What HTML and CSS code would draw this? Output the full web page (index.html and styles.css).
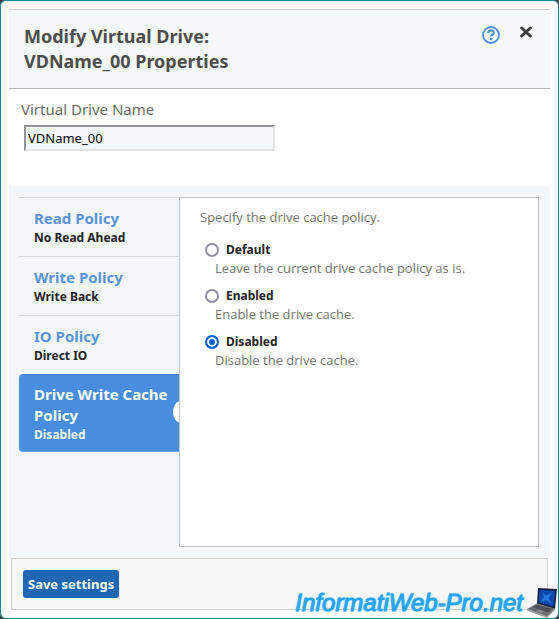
FILE: index.html
```
<!DOCTYPE html>
<html lang="en">
<head>
    <meta charset="UTF-8">
    <meta name="viewport" content="width=device-width, initial-scale=1.0">
    <title>Modify Virtual Drive</title>
    <link rel="stylesheet" href="styles.css">
</head>
<body>

    <form class="dialog">
        <header class="dialog-header">
            <h1>Modify Virtual Drive:<br>VDName_00 Properties</h1>
            <div class="header-actions">
                <button type="button" class="icon-button" aria-label="Help">
                    <svg width="18" height="18" viewBox="0 0 18 18" fill="none" stroke="#4a8fe2">
                        <circle cx="9" cy="9" r="8" stroke-width="1.8"/>
                        <path d="M6.3 6.9C6.3 5.2 7.5 4.4 9 4.4c1.6 0 2.7.9 2.7 2.2 0 1.9-2.5 2-2.5 4" stroke-width="2.2"/>
                        <path d="M8 12.9h2.4" stroke-width="2.3"/>
                    </svg>
                </button>
                <button type="button" class="icon-button" aria-label="Close">
                    <svg width="12" height="12" viewBox="0 0 12 12" stroke="#3d3d3d" stroke-width="3" stroke-linecap="round">
                        <path d="M1.7 2 10.3 10M10.3 2 1.7 10"/>
                    </svg>
                </button>
            </div>
        </header>

        <div class="name-section">
            <label for="driveName">Virtual Drive Name</label>
            <input type="text" id="driveName" name="driveName" value="VDName_00">
        </div>

        <div class="policies">
            <nav class="tabs">
                <button type="button" class="tab">
                    <span class="tab-title">Read Policy</span>
                    <span class="tab-value">No Read Ahead</span>
                </button>
                <button type="button" class="tab">
                    <span class="tab-title">Write Policy</span>
                    <span class="tab-value">Write Back</span>
                </button>
                <button type="button" class="tab">
                    <span class="tab-title">IO Policy</span>
                    <span class="tab-value">Direct IO</span>
                </button>
                <button type="button" class="tab active">
                    <span class="tab-title">Drive Write Cache Policy</span>
                    <span class="tab-value">Disabled</span>
                </button>
            </nav>

            <section class="tab-content">
                <p class="intro">Specify the drive cache policy.</p>

                <div class="option">
                    <input type="radio" id="cacheDefault" name="cache" value="default">
                    <label for="cacheDefault">Default</label>
                    <p>Leave the current drive cache policy as is.</p>
                </div>
                <div class="option">
                    <input type="radio" id="cacheEnabled" name="cache" value="enabled">
                    <label for="cacheEnabled">Enabled</label>
                    <p>Enable the drive cache.</p>
                </div>
                <div class="option">
                    <input type="radio" id="cacheDisabled" name="cache" value="disabled" checked>
                    <label for="cacheDisabled">Disabled</label>
                    <p>Disable the drive cache.</p>
                </div>
            </section>
        </div>

        <footer class="dialog-footer">
            <button type="submit" class="save-button">Save settings</button>
        </footer>

        <div class="watermark">
            <span>InformatiWeb-Pro.net</span>
            <svg width="32" height="31" viewBox="0 0 32 31">
                <path d="M12 1 31 2 29 22 11 17z" fill="#15203f"/>
                <path d="M13.5 2.8 29.3 3.8 27.6 19.5 12.7 15.6z" fill="#0b48ad"/>
                <path d="M16 4.5 20 9 26 5 22.5 11 26 17 20.5 13 15 14.5 18 10z" fill="#2478dc"/>
                <path d="M11 16.5 29 21.5 21 30 1 22z" fill="#6d7175"/>
                <path d="M11 18 26 22 22.5 25.5 6 20.3z" fill="#4c4f54"/>
                <path d="M10 24 14 22.8 18 24.4 14.3 26z" fill="#84888c"/>
                <path d="M1 22 21 29 29 21.5V23L21 31 1 23.5z" fill="#9a9da0"/>
            </svg>
        </div>
    </form>

</body>
</html>
```
FILE: styles.css
```
* {
    box-sizing: border-box;
}

body {
    margin: 0;
    background-color: #444;
    font-family: "Noto Sans", "Open Sans", sans-serif;
    font-size: 13px;
    line-height: 18px;
    color: #222;
}

h1,
p {
    margin: 0;
}

button,
input {
    font-family: inherit;
}

button {
    cursor: pointer;
}

.dialog {
    position: relative;
    display: flex;
    flex-direction: column;
    min-height: 100vh;
    padding: 8px;
    background-color: #fff;
    border: 1px solid #07889b;
    border-radius: 6px;
}

.dialog-header {
    display: flex;
    justify-content: space-between;
    align-items: flex-start;
    padding: 14px 18px 14px 15px;
    background-color: #f4f8f9;
    border-top: 1px solid #ccc;
    border-bottom: 1px solid #b5b5b5;
}

.dialog-header h1 {
    font-size: 18px;
    line-height: 25px;
    color: #4d4d4d;
}

.header-actions {
    display: flex;
    align-items: flex-start;
    gap: 20px;
    padding-top: 2px;
}

.icon-button {
    padding: 0;
    background: none;
    border: none;
}

.icon-button svg {
    display: block;
}

.name-section {
    display: flex;
    flex-direction: column;
    align-items: flex-start;
    gap: 5px;
    padding: 10px 12px 35px;
}

.name-section label {
    font-size: 15px;
    line-height: 21px;
    color: #6b6b6b;
}

.name-section input {
    width: 251px;
    height: 26px;
    margin-left: 3px;
    padding: 0 2px;
    font-size: 13px;
    color: #000;
    background-color: #f4f7f9;
    border: 2px solid;
    border-color: #929295 #e3e3e3 #e3e3e3 #929295;
}

.policies {
    display: flex;
    flex: 1;
    padding: 11px 11px 11px 10px;
    background-color: #f3f7fa;
}

.tabs {
    width: 160px;
}

.tab {
    display: block;
    width: 100%;
    padding: 10px 8px 9px 15px;
    text-align: left;
    color: #222;
    background: none;
    border: none;
    border-top: 1px solid #d3dadd;
}

.tab span {
    display: block;
    font-weight: bold;
}

.tab-title {
    font-size: 15px;
    line-height: 21px;
    color: #5b94de;
}

.tab-value {
    font-size: 12px;
    line-height: 18px;
}

.tab.active {
    position: relative;
    padding-bottom: 7px;
    overflow: hidden;
    color: #fff;
    background-color: #488de0;
    border-top: none;
    border-bottom: 1px solid #6aa6ee;
    border-radius: 4px 0 0 4px;
}

.tab.active .tab-title {
    color: #fff;
}

/* notch pointing at the selected tab */
.tab.active::after {
    content: "";
    position: absolute;
    top: 50%;
    right: -10px;
    width: 16px;
    height: 22px;
    margin-top: -12px;
    background-color: #fff;
    border-radius: 50%;
}

.tab-content {
    flex: 1;
    padding: 10px 20px;
    background-color: #fff;
    border: 1px solid #bfc7cb;
}

.tab-content p {
    font-family: "Open Sans", "Noto Sans", sans-serif;
    color: #757575;
}

.intro {
    margin-bottom: 15px;
}

.option {
    display: grid;
    grid-template-columns: 15px 1fr;
    column-gap: 6px;
    align-items: center;
    margin-bottom: 10px;
    padding-left: 5px;
}

.option input {
    appearance: none;
    width: 14px;
    height: 14px;
    margin: 0;
    background-color: #fff;
    border: 2px solid #8f8f9d;
    border-radius: 50%;
}

.option input:checked {
    background-color: #0061e0;
    border-color: #0061e0;
    box-shadow: inset 0 0 0 2px #fff;
}

.option label {
    font-size: 12px;
    font-weight: bold;
}

.option p {
    grid-column: 1 / 3;
    padding-left: 10px;
}

.dialog-footer {
    margin: 0 2px;
    padding: 11px;
    background-color: #f6f6f6;
    border: 1px solid #d2d2d2;
}

.save-button {
    display: block;
    padding: 5px;
    font-size: 13px;
    font-weight: bold;
    line-height: 18px;
    color: #fff;
    background-color: #1f66b3;
    border: none;
    border-radius: 3px;
}

.watermark {
    position: absolute;
    right: 0;
    bottom: 0;
    display: flex;
    align-items: center;
    gap: 3px;
    font-family: "Liberation Sans", Arial, sans-serif;
    font-size: 24px;
    font-style: italic;
    line-height: 31px;
    color: #2ba3f5;
    -webkit-text-stroke: 1px #2ba3f5;
    text-shadow: 0 0 2px #35d4f8;
}
```
